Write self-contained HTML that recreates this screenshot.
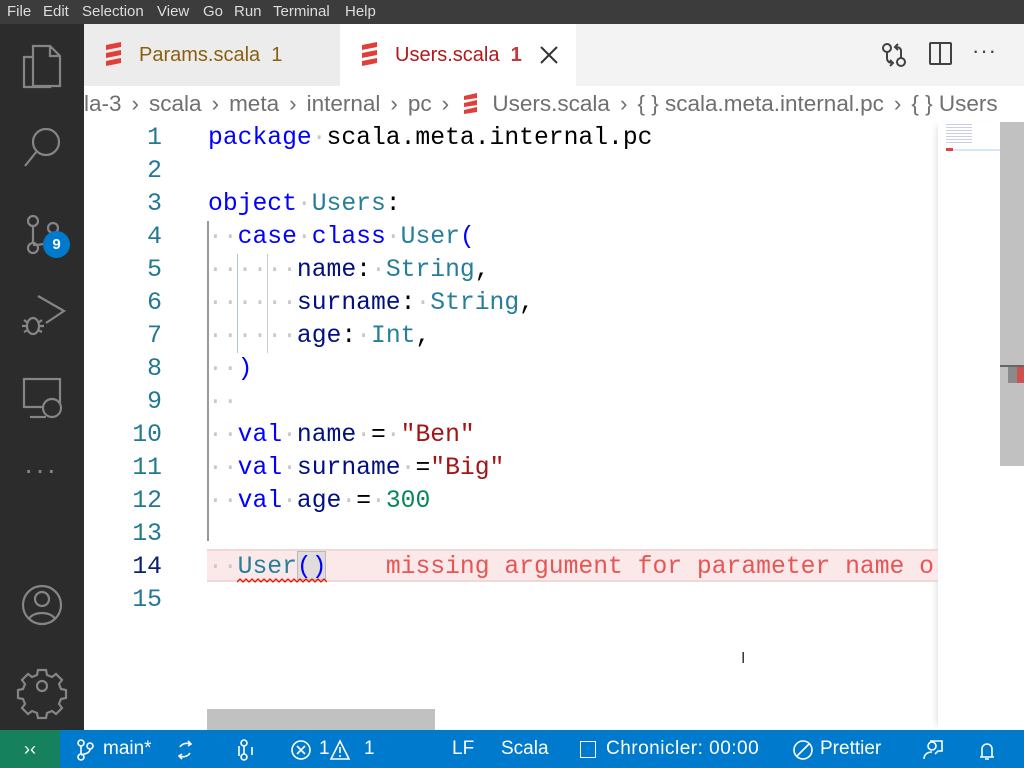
<!DOCTYPE html>
<html><head><meta charset="utf-8"><style>
*{margin:0;padding:0;box-sizing:border-box}
body{width:1024px;height:768px;overflow:hidden;background:#fff;font-family:"Liberation Sans",sans-serif;position:relative}
.abs{position:absolute}
#menu{left:0;top:0;width:1024px;height:24px;background:#3c3c3c;color:#ddd;font-size:15px;line-height:24px}
#menu span{position:absolute;top:0}
#act{left:0;top:24px;width:84px;height:706px;background:#2c2c2c}
#tabs{left:84px;top:24px;width:940px;height:62px;background:#f3f3f3}
.tab{position:absolute;top:0;height:62px;font-size:20px;line-height:62px}
#bc{left:84px;top:86px;width:940px;height:36px;font-size:22.5px;color:#6f6f6f;line-height:36px;white-space:nowrap;overflow:hidden}
#bc i{font-style:normal;margin:0 10px}
.code{position:absolute;left:208px;font-family:"Liberation Mono",monospace;font-size:24.7px;line-height:33px;white-space:pre;color:#001080}
.ln{position:absolute;left:90px;width:72px;text-align:right;font-family:"Liberation Mono",monospace;font-size:24.7px;line-height:33px;color:#237893}
.d{color:#c8c8c8}
.k{color:#0000ff}.t{color:#267f99}.s{color:#a31515}.n{color:#098658}.p{color:#000}
#status{left:0;top:730px;width:1024px;height:38px;background:#007acc;color:#fff;font-size:19px;line-height:38px}
#status span{position:absolute;top:0}
</style></head><body>
<div id="menu" class="abs"><span style="left:7px">File</span><span style="left:43px">Edit</span><span style="left:82px">Selection</span><span style="left:157px">View</span><span style="left:203px">Go</span><span style="left:234px">Run</span><span style="left:273px">Terminal</span><span style="left:345px">Help</span></div>
<div id="act" class="abs">
<svg width="84" height="706" fill="none" stroke="#858585" stroke-width="2.2">
<path d="M33 22h17l10 10v30H33z M50 22v10h10"/><path d="M33 33h-9v29c0 0 0 0 0 0v1h26v-1"/>
<circle cx="46" cy="118" r="13"/><path d="M37 127l-12 15"/>
<circle cx="33" cy="197" r="5"/><circle cx="33" cy="224" r="5"/><circle cx="53" cy="204" r="5"/><path d="M33 202v17M53 209c0 10-10 12-20 12"/>
<path d="M38 272l26 15-18 12"/><ellipse cx="33" cy="302" rx="6" ry="8"/><path d="M24 296l4 3M24 308l4-2M42 296l-4 3M42 308l-4-2M27 302h-5M39 302h5"/>
<rect x="24" y="355" width="36" height="28"/><path d="M30 393h16"/><circle cx="52" cy="384" r="9" fill="#2c2c2c"/>
<circle cx="42" cy="581" r="19"/><circle cx="42" cy="575" r="7"/><path d="M29 595c4-8 22-8 26 0"/>
<circle cx="42" cy="662" r="5"/><path d="M38 646h8l1 5 5 2 4-3 6 6-3 4 2 5 5 1v8l-5 1-2 5 3 4-6 6-4-3-5 2-1 5h-8l-1-5-5-2-4 3-6-6 3-4-2-5-5-1v-8l5-1 2-5-3-4 6-6 4 3 5-2z"/>
</svg>
<div class="abs" style="left:43px;top:207px;width:27px;height:27px;border-radius:50%;background:#007acc;color:#fff;font-weight:bold;font-size:15px;text-align:center;line-height:27px">9</div>
<div class="abs" style="left:24px;top:430px;color:#858585;font-size:28px;letter-spacing:2px">···</div>
</div>
<div id="tabs" class="abs">
<div class="tab" style="left:0;width:256px;background:#ececec;color:#8a6010;padding-left:55px">Params.scala&nbsp; 1</div>
<svg class="abs" style="left:21px;top:18px" width="17" height="24"><path d="M1 3l15-3v5L1 8zM1 11l15-3v5L1 16zM1 19l15-3v5L1 24z" fill="#e0403a"/></svg>
<div class="tab" style="left:256px;width:236px;background:#fff;color:#b01a1a;padding-left:55px">Users.scala&nbsp; <b style="font-weight:bold;color:#c43a3a">1</b></div>
<svg class="abs" style="left:277px;top:18px" width="17" height="24"><path d="M1 3l15-3v5L1 8zM1 11l15-3v5L1 16zM1 19l15-3v5L1 24z" fill="#e0403a"/></svg>
<svg class="abs" style="left:455px;top:21px" width="20" height="20" stroke="#333" stroke-width="2"><path d="M2 2l16 16M18 2L2 18"/></svg>
<svg class="abs" style="left:796px;top:16px" width="130" height="32" fill="none" stroke="#424242" stroke-width="2"><circle cx="7" cy="8" r="4"/><circle cx="21" cy="22" r="4"/><path d="M7 12v6c0 4 3 5 6 5M10 20l3 3-3 3M21 18v-7c0-3-2-4-6-4M18 4l-3 3 3 3"/><rect x="50" y="3" width="21" height="21" rx="1"/><path d="M60 3v21"/></svg>
<div class="abs" style="left:888px;top:14px;font-size:22px;color:#424242;letter-spacing:1px">···</div>
</div>
<div id="bc" class="abs">la-3<i>›</i>scala<i>›</i>meta<i>›</i>internal<i>›</i>pc<i>›</i><svg style="vertical-align:-3px;margin:0 8px 0 4px" width="15" height="21"><path d="M1 3l13-3v5L1 7zM1 10l13-3v5L1 14zM1 17l13-3v5L1 21z" fill="#e0403a"/></svg> Users.scala<i>›</i>{ } scala.meta.internal.pc<i>›</i>{ } Users</div>
<!-- minimap -->
<div class="abs" style="left:938px;top:122px;width:62px;height:608px;background:#fff;box-shadow:-5px 0 6px -4px #ddd"></div>
<div class="abs" style="left:946px;top:149px;width:54px;height:2px;background:#d5e8fb"></div>
<div class="abs" style="left:946px;top:148px;width:7px;height:3px;background:#e04040"></div>
<div class="abs" style="left:946px;top:124px;width:26px;height:20px;background:repeating-linear-gradient(#c8cde8 0 1px,transparent 1px 3px)"></div>
<div class="abs" style="left:1000px;top:122px;width:24px;height:344px;background:#c1c1c1"></div>
<div class="abs" style="left:1000px;top:365px;width:24px;height:2px;background:#666"></div>
<div class="abs" style="left:1008px;top:367px;width:9px;height:16px;background:#8a8a8a"></div>
<div class="abs" style="left:1017px;top:367px;width:7px;height:16px;background:#d05050"></div>
<div class="abs" style="left:207px;top:709px;width:228px;height:21px;background:#c1c1c1"></div>
<!-- indent guides -->
<div class="abs" style="left:207px;top:221px;width:2px;height:320px;background:#999"></div>
<div class="abs" style="left:237px;top:254px;width:1px;height:99px;background:#a8c8e8"></div>
<div class="abs" style="left:267px;top:254px;width:1px;height:99px;background:#ccc"></div>
<!-- error line -->
<div class="abs" style="left:207px;top:549px;width:731px;height:33px;background:#fbe8e8;border-top:2px solid #f1d8d8;border-bottom:2px solid #f1d8d8"></div>
<div class="abs" style="left:297px;top:551px;width:29px;height:29px;background:#e0dcdc;border:1px solid #bbb"></div>
<svg class="abs" style="left:237px;top:578px" width="90" height="6"><path d="M0 4l3-3 3 3 3-3 3 3 3-3 3 3 3-3 3 3 3-3 3 3 3-3 3 3 3-3 3 3 3-3 3 3 3-3 3 3 3-3 3 3 3-3 3 3 3-3 3 3 3-3 3 3 3-3 3 3 3-3 3 3" fill="none" stroke="#e51400" stroke-width="1.3"/></svg>
<div class="ln" style="top:122px">1</div><div class="ln" style="top:155px">2</div><div class="ln" style="top:188px">3</div><div class="ln" style="top:221px">4</div><div class="ln" style="top:254px">5</div><div class="ln" style="top:287px">6</div><div class="ln" style="top:320px">7</div><div class="ln" style="top:353px">8</div><div class="ln" style="top:386px">9</div><div class="ln" style="top:419px">10</div><div class="ln" style="top:452px">11</div><div class="ln" style="top:485px">12</div><div class="ln" style="top:518px">13</div><div class="ln" style="top:551px;color:#0b216f">14</div><div class="ln" style="top:584px">15</div>
<div class="code" style="top:122px"><span class="k">package</span><span class="d">·</span><span class="p">scala.meta.internal.pc</span></div>
<div class="code" style="top:188px"><span class="k">object</span><span class="d">·</span><span class="t">Users</span><span class="p">:</span></div>
<div class="code" style="top:221px"><span class="d">··</span><span class="k">case</span><span class="d">·</span><span class="k">class</span><span class="d">·</span><span class="t">User</span><span class="k">(</span></div>
<div class="code" style="top:254px"><span class="d">······</span>name<span class="p">:</span><span class="d">·</span><span class="t">String</span><span class="p">,</span></div>
<div class="code" style="top:287px"><span class="d">······</span>surname<span class="p">:</span><span class="d">·</span><span class="t">String</span><span class="p">,</span></div>
<div class="code" style="top:320px"><span class="d">······</span>age<span class="p">:</span><span class="d">·</span><span class="t">Int</span><span class="p">,</span></div>
<div class="code" style="top:353px"><span class="d">··</span><span class="k">)</span></div>
<div class="code" style="top:386px"><span class="d">··</span></div>
<div class="code" style="top:419px"><span class="d">··</span><span class="k">val</span><span class="d">·</span>name<span class="d">·</span><span class="p">=</span><span class="d">·</span><span class="s">"Ben"</span></div>
<div class="code" style="top:452px"><span class="d">··</span><span class="k">val</span><span class="d">·</span>surname<span class="d">·</span><span class="p">=</span><span class="s">"Big"</span></div>
<div class="code" style="top:485px"><span class="d">··</span><span class="k">val</span><span class="d">·</span>age<span class="d">·</span><span class="p">=</span><span class="d">·</span><span class="n">300</span></div>
<div class="code" style="top:551px"><span class="d">··</span><span class="t">User</span><span class="k">()</span>    <span style="color:#e85555">missing argument for parameter name o</span></div>
<div class="abs" style="left:741px;top:650px;font-size:16px;color:#333">I</div>
<div id="status" class="abs">
<div class="abs" style="left:0;top:0;width:60px;height:38px;background:#16825d;text-align:center;font-size:18px">›‹</div>
<svg class="abs" style="left:76px;top:9px" width="300" height="22" fill="none" stroke="#fff" stroke-width="1.6"><circle cx="5" cy="4" r="3"/><circle cx="5" cy="18" r="3"/><circle cx="14" cy="7" r="3"/><path d="M5 7v8M14 10c0 4-5 5-9 6"/><path d="M114 5a8 8 0 0 0-10 3M112 2l3 3-3 2M104 17a8 8 0 0 0 10-3M106 20l-3-3 3-2"/><circle cx="168" cy="4" r="3"/><circle cx="168" cy="18" r="3"/><path d="M168 7v8M163 7v10M176 8v8"/><circle cx="225" cy="11" r="9"/><path d="M221 7l8 8M229 7l-8 8"/><path d="M264 2l-9 18h18zM264 8v6M264 16v2"/></svg>
<span style="left:103px">main*</span><span style="left:319px">1</span><span style="left:364px">1</span>
<span style="left:452px">LF</span><span style="left:501px">Scala</span>
<div class="abs" style="left:580px;top:11px;width:16px;height:17px;border:1.6px solid #fff"></div><span style="left:606px;letter-spacing:0.5px">Chronicler: 00:00</span>
<svg class="abs" style="left:793px;top:9px" width="210" height="22" fill="none" stroke="#fff" stroke-width="1.6"><circle cx="10" cy="11" r="9"/><path d="M4 17L16 5"/><circle cx="139" cy="7" r="4"/><path d="M131 20c0-5 4-7 8-7M137 2h12v10h-4l-3 3"/><path d="M187 18h14M189 18v-8a5 5 0 0 1 10 0v8M192 20h4"/></svg>
<span style="left:820px">Prettier</span>
</div>
</body></html>
